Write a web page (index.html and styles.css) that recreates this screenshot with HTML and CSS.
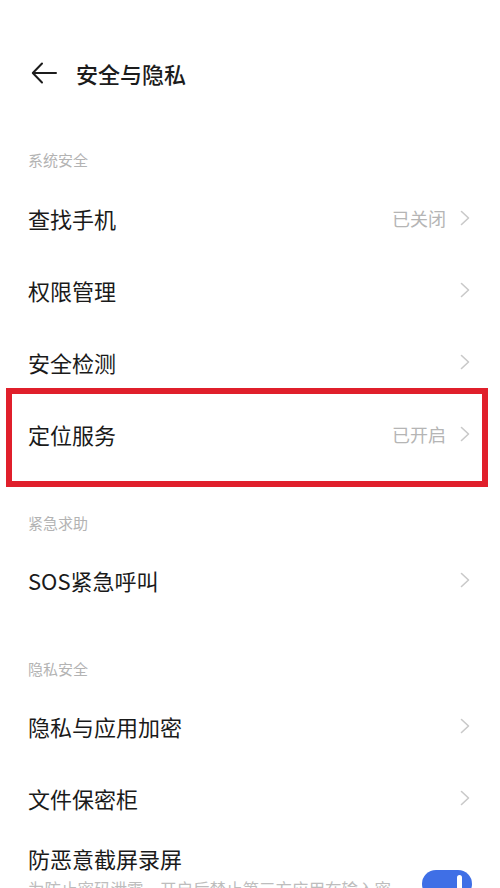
FILE: index.html
```html
<!DOCTYPE html>
<html lang="zh-CN">
<head>
<meta charset="UTF-8" />
<meta name="viewport" content="width=device-width, initial-scale=1" />
<title>安全与隐私</title>
<link rel="stylesheet" href="styles.css">
</head>
<body>
  <div class="page">
    <header class="top-bar">
      <svg class="back" width="26" height="22" viewBox="0 0 26 22" aria-hidden="true">
        <path d="M25 11H2M11 1.5L1.8 11l9.2 9.5" fill="none" stroke="#1c1c1c" stroke-width="2" stroke-linecap="round" stroke-linejoin="round"/>
      </svg>
      <h1>安全与隐私</h1>
    </header>

    <div class="section-title">系统安全</div>
    <div class="row">
      <span class="row-label">查找手机</span>
      <span class="row-value">已关闭</span>
      <svg class="chevron" width="10" height="16" viewBox="0 0 10 16"><path d="M1.5 1.5L8.5 8l-7 6.5" fill="none" stroke="#c9c9c9" stroke-width="1.6" stroke-linecap="round" stroke-linejoin="round"/></svg>
    </div>
    <div class="row">
      <span class="row-label">权限管理</span>
      <svg class="chevron" width="10" height="16" viewBox="0 0 10 16"><path d="M1.5 1.5L8.5 8l-7 6.5" fill="none" stroke="#c9c9c9" stroke-width="1.6" stroke-linecap="round" stroke-linejoin="round"/></svg>
    </div>
    <div class="row">
      <span class="row-label">安全检测</span>
      <svg class="chevron" width="10" height="16" viewBox="0 0 10 16"><path d="M1.5 1.5L8.5 8l-7 6.5" fill="none" stroke="#c9c9c9" stroke-width="1.6" stroke-linecap="round" stroke-linejoin="round"/></svg>
    </div>
    <div class="row highlighted">
      <span class="row-label">定位服务</span>
      <span class="row-value">已开启</span>
      <svg class="chevron" width="10" height="16" viewBox="0 0 10 16"><path d="M1.5 1.5L8.5 8l-7 6.5" fill="none" stroke="#c9c9c9" stroke-width="1.6" stroke-linecap="round" stroke-linejoin="round"/></svg>
    </div>

    <div class="section-title">紧急求助</div>
    <div class="row">
      <span class="row-label">SOS紧急呼叫</span>
      <svg class="chevron" width="10" height="16" viewBox="0 0 10 16"><path d="M1.5 1.5L8.5 8l-7 6.5" fill="none" stroke="#c9c9c9" stroke-width="1.6" stroke-linecap="round" stroke-linejoin="round"/></svg>
    </div>

    <div class="section-title">隐私安全</div>
    <div class="row">
      <span class="row-label">隐私与应用加密</span>
      <svg class="chevron" width="10" height="16" viewBox="0 0 10 16"><path d="M1.5 1.5L8.5 8l-7 6.5" fill="none" stroke="#c9c9c9" stroke-width="1.6" stroke-linecap="round" stroke-linejoin="round"/></svg>
    </div>
    <div class="row">
      <span class="row-label">文件保密柜</span>
      <svg class="chevron" width="10" height="16" viewBox="0 0 10 16"><path d="M1.5 1.5L8.5 8l-7 6.5" fill="none" stroke="#c9c9c9" stroke-width="1.6" stroke-linecap="round" stroke-linejoin="round"/></svg>
    </div>
    <div class="row row-tall">
      <div class="row-text">
        <span class="row-label">防恶意截屏录屏</span>
        <span class="row-desc">为防止密码泄露，开启后禁止第三方应用在输入密码时截屏或录屏</span>
      </div>
      <span class="switch on"><span class="knob"></span></span>
    </div>
  </div>
</body>
</html>
```

FILE: styles.css
```css
* {
  box-sizing: border-box;
}
body {
  margin: 0;
  background: #fff;
  font-family: "Noto Sans CJK SC", "Noto Sans", sans-serif;
  color: #1a1a1a;
}
.page {
  width: 500px;
  height: 888px;
  overflow: hidden;
}

.top-bar {
  display: flex;
  align-items: center;
  height: 107px;
  padding: 60px 0 21px 31px;
}
.top-bar .back {
  display: block;
  margin-right: 19px;
}
.top-bar h1 {
  margin: 0;
  font-size: 22px;
  line-height: 26px;
  font-weight: 500;
  color: #1c1c1c;
}

.section-title {
  padding: 43px 28px 11px;
  font-size: 15px;
  line-height: 20px;
  color: #b3b3b3;
}
.top-bar + .section-title {
  padding-bottom: 12px;
}

.row {
  position: relative;
  display: flex;
  align-items: center;
  height: 72px;
  padding: 0 30px 0 28px;
}
.row-label {
  flex: 1;
  font-size: 22px;
  line-height: 28px;
  color: #1a1a1a;
}
.row-value {
  font-size: 18px;
  color: #b5b5b5;
  margin-right: 14px;
}
.chevron {
  display: block;
}

/* red annotation frame */
.highlighted::after {
  content: "";
  position: absolute;
  left: 6px;
  right: 12px;
  top: -10px;
  bottom: -17px;
  border: 6px solid #e01f2b;
  pointer-events: none;
}

.row-tall {
  height: auto;
  align-items: flex-start;
  padding-top: 10px;
  padding-right: 28px;
}
.row-text {
  flex: 1;
  display: flex;
  flex-direction: column;
  min-width: 0;
}
.row-desc {
  margin-top: 6px;
  font-size: 16.5px;
  line-height: 22px;
  color: #bdbdbd;
  max-width: 370px;
}
.switch {
  flex: none;
  position: relative;
  width: 50px;
  height: 28px;
  margin-top: 26px;
  margin-left: 30px;
  border-radius: 14px;
  background: #3f6fe6;
}
.switch .knob {
  position: absolute;
  right: 10px;
  top: 5px;
  width: 5px;
  height: 18px;
  border-radius: 3px;
  background: #fff;
}
```
